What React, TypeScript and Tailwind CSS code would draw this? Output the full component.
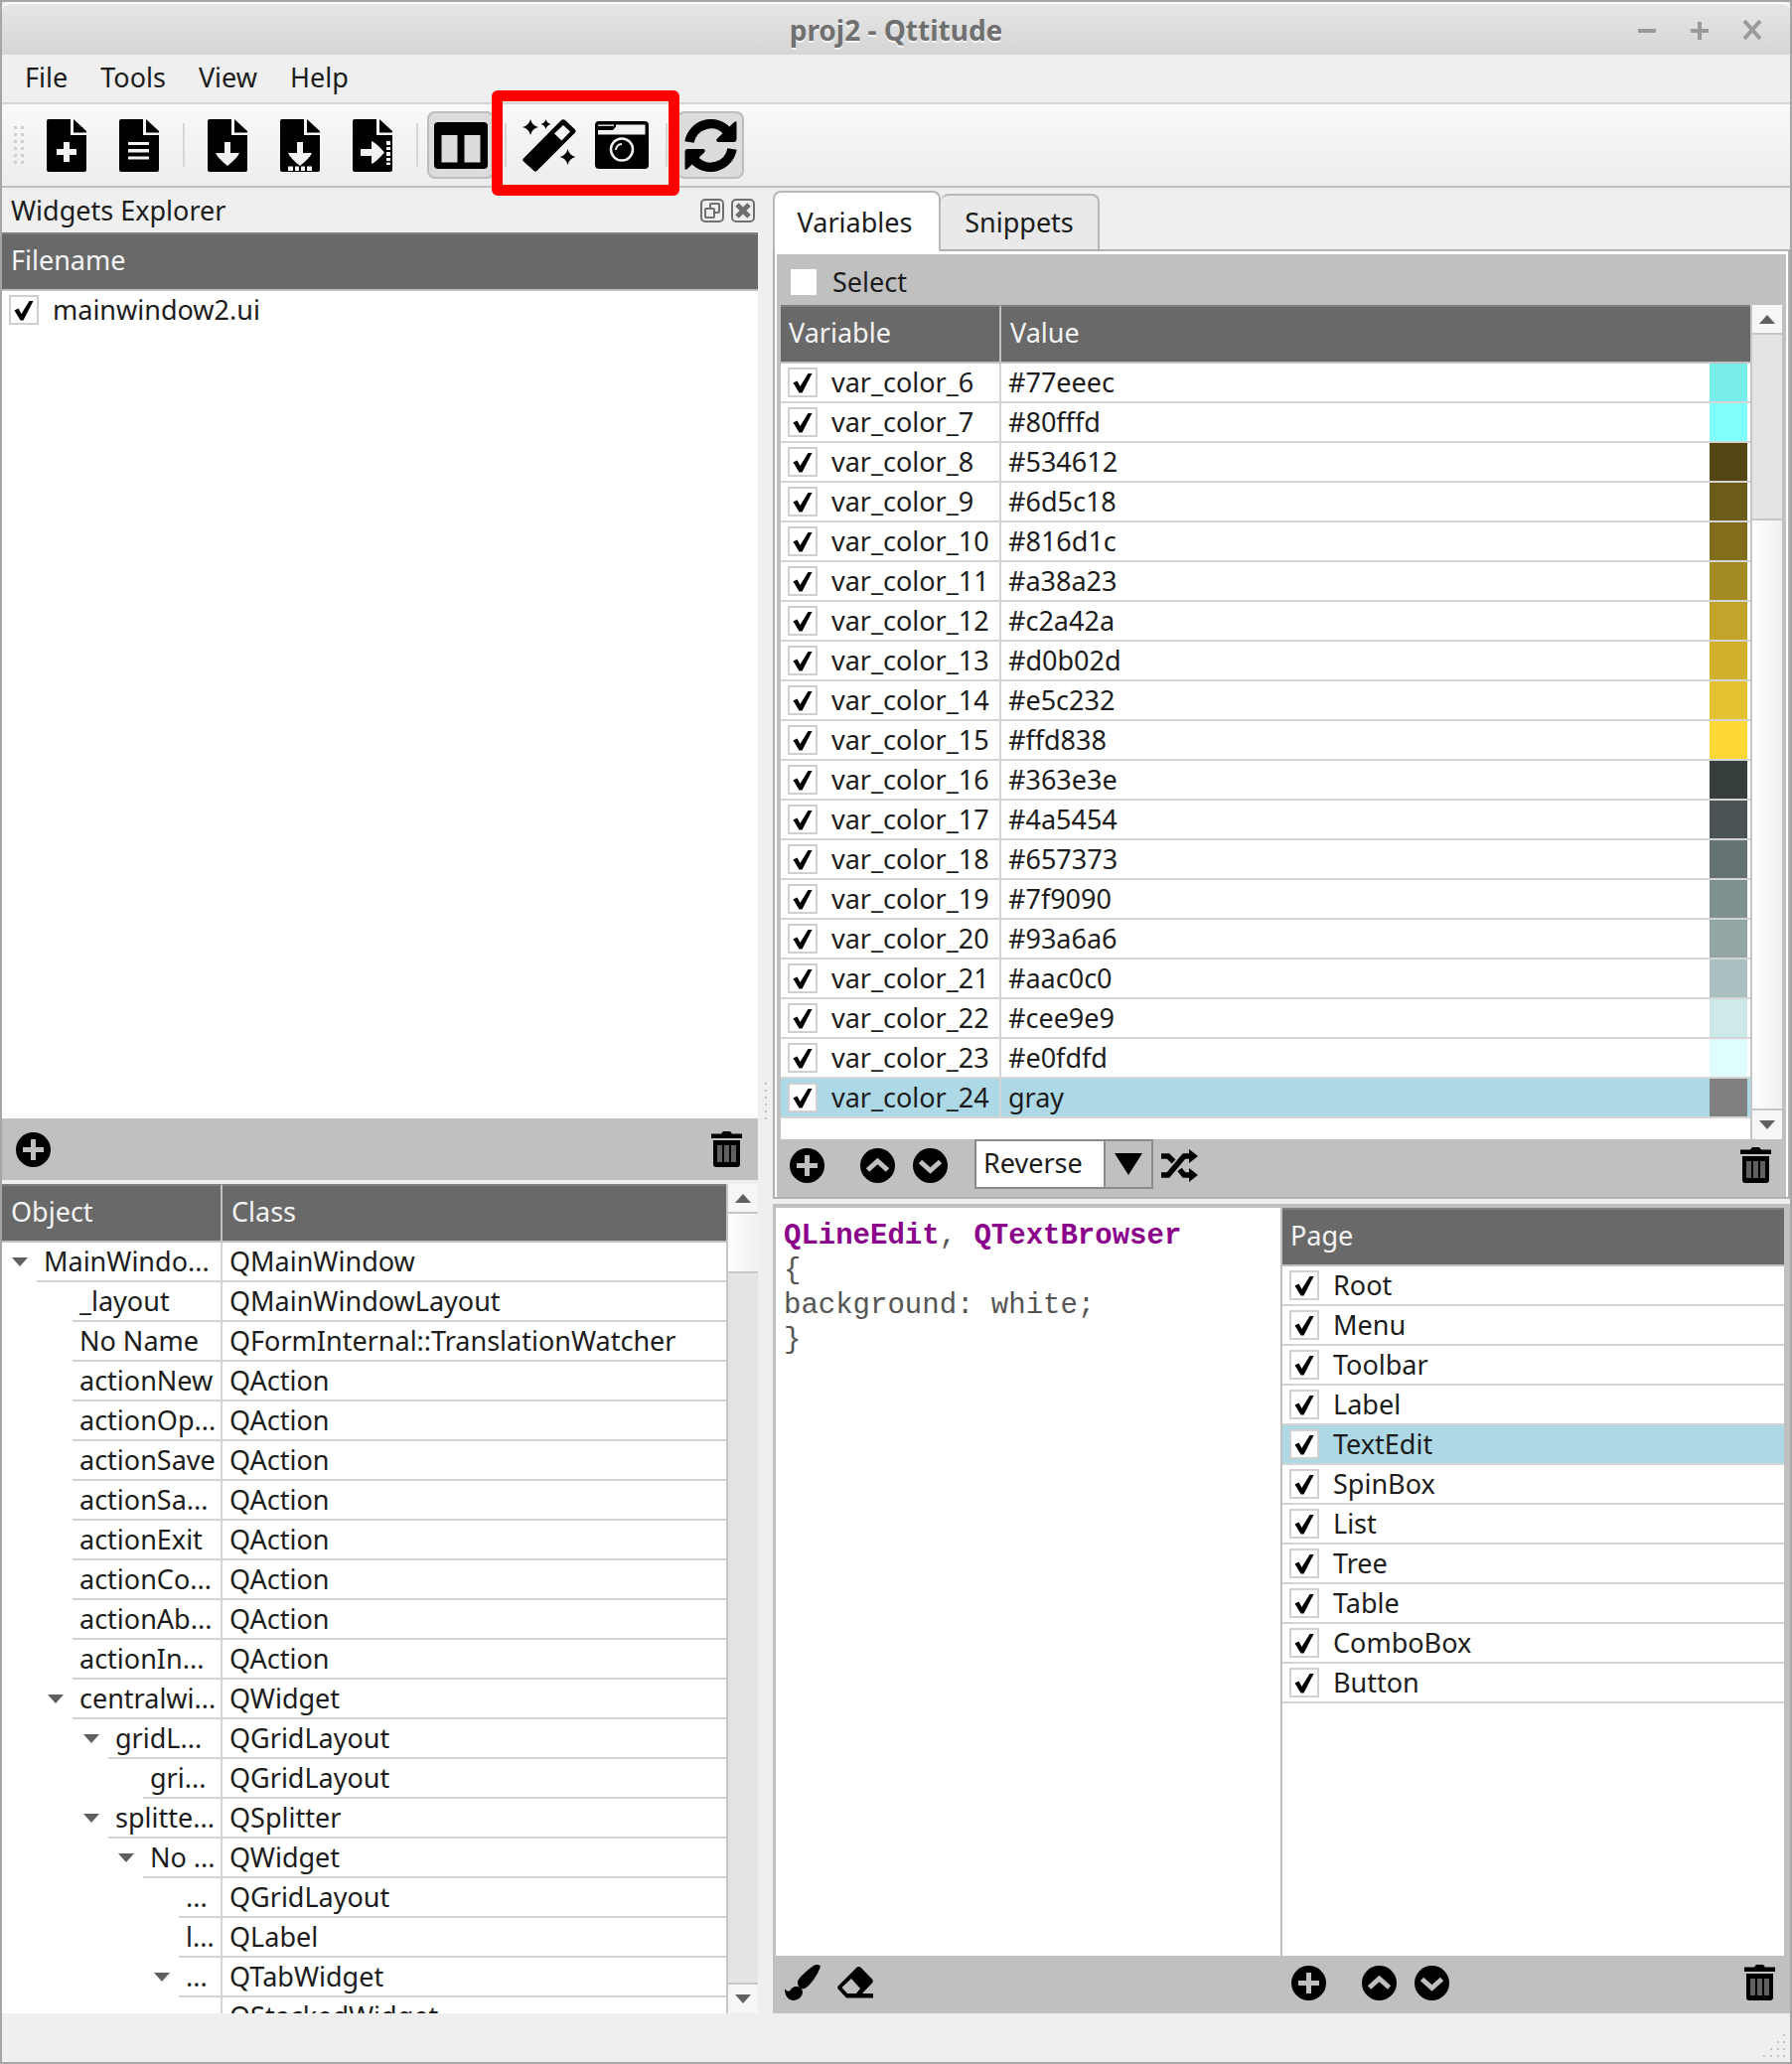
import type { InputHTMLAttributes, ReactNode } from "react"
import clsx from "clsx"

interface IconButtonProps {
  label: string
  className?: string
  children: ReactNode
}

interface TreeNode {
  depth: number
  name: string
  cls: string
  open?: boolean
}

const variables = [
  { name: "var_color_6", value: "#77eeec" },
  { name: "var_color_7", value: "#80fffd" },
  { name: "var_color_8", value: "#534612" },
  { name: "var_color_9", value: "#6d5c18" },
  { name: "var_color_10", value: "#816d1c" },
  { name: "var_color_11", value: "#a38a23" },
  { name: "var_color_12", value: "#c2a42a" },
  { name: "var_color_13", value: "#d0b02d" },
  { name: "var_color_14", value: "#e5c232" },
  { name: "var_color_15", value: "#ffd838" },
  { name: "var_color_16", value: "#363e3e" },
  { name: "var_color_17", value: "#4a5454" },
  { name: "var_color_18", value: "#657373" },
  { name: "var_color_19", value: "#7f9090" },
  { name: "var_color_20", value: "#93a6a6" },
  { name: "var_color_21", value: "#aac0c0" },
  { name: "var_color_22", value: "#cee9e9" },
  { name: "var_color_23", value: "#e0fdfd" },
  { name: "var_color_24", value: "gray", selected: true },
]

const pages = [
  "Root",
  "Menu",
  "Toolbar",
  "Label",
  "TextEdit",
  "SpinBox",
  "List",
  "Tree",
  "Table",
  "ComboBox",
  "Button",
]

const tree: TreeNode[] = [
  { depth: 0, name: "MainWindo...", cls: "QMainWindow", open: true },
  { depth: 1, name: "_layout", cls: "QMainWindowLayout" },
  { depth: 1, name: "No Name", cls: "QFormInternal::TranslationWatcher" },
  { depth: 1, name: "actionNew", cls: "QAction" },
  { depth: 1, name: "actionOp...", cls: "QAction" },
  { depth: 1, name: "actionSave", cls: "QAction" },
  { depth: 1, name: "actionSa...", cls: "QAction" },
  { depth: 1, name: "actionExit", cls: "QAction" },
  { depth: 1, name: "actionCo...", cls: "QAction" },
  { depth: 1, name: "actionAb...", cls: "QAction" },
  { depth: 1, name: "actionIn...", cls: "QAction" },
  { depth: 1, name: "centralwi...", cls: "QWidget", open: true },
  { depth: 2, name: "gridL...", cls: "QGridLayout", open: true },
  { depth: 3, name: "gri...", cls: "QGridLayout" },
  { depth: 2, name: "splitte...", cls: "QSplitter", open: true },
  { depth: 3, name: "No ...", cls: "QWidget", open: true },
  { depth: 4, name: "...", cls: "QGridLayout" },
  { depth: 4, name: "l...", cls: "QLabel" },
  { depth: 4, name: "...", cls: "QTabWidget", open: true },
  { depth: 5, name: "", cls: "QStackedWidget" },
]

const indents = ["ml-[35px]", "ml-[71px]", "ml-[107px]", "ml-[142px]", "ml-[178px]", "ml-[214px]"]

/* ---------- icons ---------- */

function FileIcon({ children }: { children: ReactNode }) {
  return (
    <svg width="40" height="53" viewBox="0 0 40 53" aria-hidden="true">
      <path d="M2 0H24V16H40V51a2 2 0 0 1-2 2H2a2 2 0 0 1-2-2V2a2 2 0 0 1 2-2Z" />
      <path d="M27 0L40 12V13.500H27Z" />
      <g fill="#f2f2f2">{children}</g>
    </svg>
  )
}

function LayoutIcon() {
  return (
    <svg width="54" height="47" viewBox="0 0 54 47" aria-hidden="true">
      <path
        fillRule="evenodd"
        d="M4 0H50a4 4 0 0 1 4 4V43a4 4 0 0 1-4 4H4a4 4 0 0 1-4-4V4a4 4 0 0 1 4-4ZM7.500 13V40.500H23.500V13ZM30.500 13V40.500H46.500V13Z"
      />
    </svg>
  )
}

function WandIcon() {
  return (
    <svg width="54" height="53" viewBox="0 0 54 53" aria-hidden="true">
      <path
        fillRule="evenodd"
        d="M39 1Q41-.5 43 1L53 10.500Q54 12 53 13.500L14.500 52Q13 53.500 11.500 52L1 42.500Q-.5 41 1 39.500ZM41 6L32 14.500L39.500 21.500L48 12.500Z"
      />
      <path d="M8 0Q9.500 6.500 16 8Q9.500 9.500 8 16Q6.500 9.500 0 8Q6.500 6.500 8 0Z" />
      <path d="M23.500 0Q24.500 4 28.500 5Q24.500 6 23.500 10Q22.500 6 18.500 5Q22.500 4 23.500 0Z" />
      <path d="M45.500 30Q47 36.500 53.500 38Q47 39.500 45.500 46Q44 39.500 37.500 38Q44 36.500 45.500 30Z" />
    </svg>
  )
}

function CameraIcon() {
  return (
    <svg width="54" height="48" viewBox="0 0 54 48" aria-hidden="true">
      <rect width="54" height="48" rx="4" />
      <path fill="#f2f2f2" d="M3 9H18L21 5.500V3.500H50.500V13.500H3Z" />
      <path fill="#d8d8d8" d="M3 3.500H19V5H3Z" />
      <circle cx="27" cy="28.500" r="11" fill="none" stroke="#f2f2f2" strokeWidth="2.500" />
      <path d="M21 29a6 6 0 0 1 6-6" fill="none" stroke="#f2f2f2" strokeWidth="2" />
    </svg>
  )
}

function SyncIcon() {
  return (
    <svg width="53" height="53" viewBox="0 0 53 53" aria-hidden="true">
      <path d="M5 23A22 22 0 0 1 43 12" fill="none" stroke="#000" strokeWidth="9.500" />
      <path d="M52.500 3V20a3 3 0 0 1-3 3H34Q31 22 33 19.500L50 3Q52 1.500 52.500 3Z" />
      <path d="M48 30A22 22 0 0 1 10 41" fill="none" stroke="#000" strokeWidth="9.500" />
      <path d="M.5 50V33a3 3 0 0 1 3-3H19Q22 31 20 33.500L3 50Q1 51.500 .5 50Z" />
    </svg>
  )
}

function CircleIcon({ d }: { d: string }) {
  return (
    <svg width="35" height="35" viewBox="0 0 35 35" aria-hidden="true">
      <circle cx="17.500" cy="17.500" r="17.500" />
      <path d={d} fill="none" stroke="#c0c0c0" strokeWidth="5" />
    </svg>
  )
}

const plusPath = "M17.500 7V28M7 17.500H28"
const upPath = "M7.500 22L17.500 13L27.500 22"
const downPath = "M7.500 13.500L17.500 22.500L27.500 13.500"

function TrashIcon() {
  return (
    <svg width="31" height="36" viewBox="0 0 31 36" aria-hidden="true">
      <path d="M0 2.500H10L12 0H19L21 2.500H31V7H0ZM2 9H29V33a3 3 0 0 1-3 3H5a3 3 0 0 1-3-3Z" />
      <path fill="#606060" d="M6 14H11V31H6ZM13 14H18V31H13ZM20 14H25V31H20Z" />
    </svg>
  )
}

function ShuffleIcon() {
  return (
    <svg width="37" height="33" viewBox="0 0 37 33" aria-hidden="true">
      <path
        d="M0 7H7L12.500 12.500M0 26H7L23 7H30M18.500 20.500L23 26H30"
        fill="none"
        stroke="#000"
        strokeWidth="5.500"
      />
      <path d="M28 0L37 7L28 14ZM28 19L37 26L28 33Z" />
    </svg>
  )
}

function BrushIcon() {
  return (
    <svg width="36" height="36" viewBox="0 0 36 36" aria-hidden="true">
      <path d="M36 2C35-.5 31-.3 29 1C22 6 14 13 13 17C12.500 22 16 25 20 24C26 21 33 10 36 2Z" />
      <path d="M12 22C16 22 18 25 18 28C17 34 12 36 8 36C3 35 0 31 0 24.500C3 27.500 5 27 6 25C8 22.500 10 22 12 22Z" />
    </svg>
  )
}

function EraserIcon() {
  return (
    <svg width="36" height="32" viewBox="0 0 36 32" aria-hidden="true">
      <path
        fillRule="evenodd"
        d="M19.500 .7Q21.500-.6 23.500 .7L35 12.500Q36.500 14.500 35 16.500L25 27H36V31.500H9L.7 22.500Q-.5 21 .7 19.500ZM14 12L4.500 21L10 27H19L23 22Z"
      />
    </svg>
  )
}

function Triangle({ up = false }: { up?: boolean }) {
  return (
    <svg width="16" height="9" viewBox="0 0 16 9" className="shrink-0" aria-hidden="true">
      <path d={up ? "M0 9L8 0L16 9Z" : "M0 0L8 9L16 0Z"} fill="#5f5f5f" />
    </svg>
  )
}

/* ---------- controls ---------- */

function ToolButton({ label, pressed, children }: IconButtonProps & { pressed?: boolean }) {
  return (
    <button
      aria-label={label}
      aria-pressed={pressed}
      className={clsx(
        "flex h-[68px] w-[68px] shrink-0 items-center justify-center rounded-lg border-2",
        pressed ? "border-[#bdbdbd] bg-[#dcdcdc]" : "border-transparent",
      )}
    >
      {children}
    </button>
  )
}

function Separator() {
  return (
    <div className="flex h-11 w-[11px] shrink-0 justify-center">
      <div className="w-0.5 bg-[#d6d6d6]" />
    </div>
  )
}

function IconButton({ label, className, children }: IconButtonProps) {
  return (
    <button
      aria-label={label}
      className={clsx("flex h-9 w-[53px] shrink-0 items-center justify-center", className)}
    >
      {children}
    </button>
  )
}

function Checkbox(props: InputHTMLAttributes<HTMLInputElement>) {
  return (
    <span className="relative block h-[30px] w-[30px] shrink-0">
      <input
        type="checkbox"
        className="peer block h-full w-full appearance-none border-2 border-[#d0d0d0] bg-white"
        {...props}
      />
      <svg
        viewBox="0 0 30 30"
        className="pointer-events-none absolute inset-0 hidden peer-checked:block"
        aria-hidden="true"
      >
        <path d="M5.500 15.500L9.500 13.500L12.500 19L20.500 6H24.500L14.500 25.500H11.500Z" />
      </svg>
    </span>
  )
}

function ScrollBar({ thumb }: { thumb: "top" | "bottom" }) {
  return (
    <div className="flex w-8 shrink-0 flex-col border-l-2 border-[#c6c6c6] bg-[#e4e4e4]">
      <button
        aria-label="Scroll up"
        className="flex h-[30px] shrink-0 items-center justify-center border-b-2 border-[#c6c6c6] bg-[#f6f6f6]"
      >
        <Triangle up />
      </button>
      {thumb === "top" ? (
        <div className="h-[60px] shrink-0 border-b-2 border-[#c6c6c6] bg-linear-to-r from-white to-[#f0f0f0]" />
      ) : (
        <>
          <div className="grow-[186]" />
          <div className="grow-[594] border-t-2 border-[#c6c6c6] bg-linear-to-r from-white to-[#f0f0f0]" />
        </>
      )}
      {thumb === "top" && <div className="grow" />}
      <button
        aria-label="Scroll down"
        className="flex h-[31px] shrink-0 items-center justify-center border-t-2 border-[#c6c6c6] bg-[#f6f6f6]"
      >
        <Triangle />
      </button>
    </div>
  )
}

const headCell =
  "h-[59px] border-y-2 border-t-[#808080] border-b-[#c0c0c0] bg-[#696969] pt-0 pb-1 text-left font-normal text-[#f4f4f4]"

/* ---------- panels ---------- */

function TitleBar() {
  return (
    <header className="grid h-[53px] shrink-0 grid-cols-[1fr_auto_1fr] items-center rounded-t-lg border-t-2 border-white bg-linear-to-b from-[#e6e6e6] to-[#d5d5d5] px-5">
      <span />
      <h1 className="text-[28px] font-bold text-[#707070] [text-shadow:0_2px_0_#f4f4f4]">
        proj2 - Qttitude
      </h1>
      <div className="flex justify-end gap-[17px]">
        {["M9 15H27", "M18 6V24M9 15H27", "M10 5L26 23M26 5L10 23"].map((d, i) => (
          <button key={d} aria-label={["Minimize", "Maximize", "Close"][i]}>
            <svg width="36" height="28" viewBox="0 0 36 28" aria-hidden="true">
              <path d={d} fill="none" stroke="#9a9a9a" strokeWidth="4" />
            </svg>
          </button>
        ))}
      </div>
    </header>
  )
}

function ToolBar() {
  return (
    <div className="flex h-[86px] shrink-0 items-center gap-[5px] border-y-2 border-t-[#d4d4d4] border-b-[#bfbfbf] bg-linear-to-b from-[#f9f9f9] to-[#ededed] pl-3">
      <div className="mr-1 grid grid-cols-2 gap-1">
        {Array.from({ length: 12 }, (_, i) => (
          <div key={i} className="h-[3px] w-[3px] bg-[#d0d0d0]" />
        ))}
      </div>
      <ToolButton label="New file">
        <FileIcon>
          <path d="M17 23H23V30H30V36H23V43H17V36H10V30H17Z" />
        </FileIcon>
      </ToolButton>
      <ToolButton label="Open file">
        <FileIcon>
          <path d="M9 23H30V26H9ZM9 30H30V33.500H9ZM9 37.500H30V40.500H9Z" />
        </FileIcon>
      </ToolButton>
      <Separator />
      <ToolButton label="Save">
        <FileIcon>
          <path d="M17 23H23V34H32Q30 39 20 47Q10 39 8 34H17Z" />
        </FileIcon>
      </ToolButton>
      <ToolButton label="Save as">
        <FileIcon>
          <path d="M17 23H23V34H32Q30 39 20 47Q10 39 8 34H17Z" />
          <path d="M8 47.500H13V52H8ZM15 47.500H19V52H15ZM21 47.500H25V52H21ZM27 47.500H32V52H27Z" />
        </FileIcon>
      </ToolButton>
      <ToolButton label="Export">
        <FileIcon>
          <path d="M8 30H19V22Q24 24 32 33.500Q24 43 19 45V37H8Z" />
          <path d="M34 22H38V26H34ZM34 28H38V31H34ZM34 33H38V37H34ZM34 39H38V42H34ZM34 43.500H38V46H34Z" />
        </FileIcon>
      </ToolButton>
      <Separator />
      <ToolButton label="Panels" pressed>
        <LayoutIcon />
      </ToolButton>
      <Separator />
      <div className="relative flex gap-[5px]">
        <ToolButton label="Apply style">
          <WandIcon />
        </ToolButton>
        <ToolButton label="Screenshot">
          <CameraIcon />
        </ToolButton>
        <div className="pointer-events-none absolute -inset-x-[24px] -top-[21px] -bottom-[17px] z-20 rounded-md border-[11px] border-[#ff0000]" />
      </div>
      <Separator />
      <ToolButton label="Auto refresh" pressed>
        <SyncIcon />
      </ToolButton>
    </div>
  )
}

function WidgetsExplorer() {
  return (
    <section className="flex min-h-0 flex-col">
      <div className="flex h-[45px] shrink-0 items-center gap-[7px] pr-[3px] pl-[9px]">
        <h2 className="grow">Widgets Explorer</h2>
        <button aria-label="Float">
          <svg width="24" height="24" viewBox="0 0 24 24" fill="none" stroke="#707070" strokeWidth="2" aria-hidden="true">
            <rect x="1" y="1" width="22" height="22" rx="4" />
            <rect x="10" y="5" width="9" height="9" rx="1" />
            <rect x="5" y="10" width="9" height="9" rx="1" fill="#efefef" />
          </svg>
        </button>
        <button aria-label="Close panel">
          <svg width="24" height="24" viewBox="0 0 24 24" fill="none" stroke="#707070" strokeWidth="2" aria-hidden="true">
            <rect x="1" y="1" width="22" height="22" rx="4" />
            <path d="M6 6L18 18M18 6L6 18" strokeWidth="5" />
          </svg>
        </button>
      </div>
      <div className="min-h-0 grow bg-white">
        <table className="w-full border-separate border-spacing-0">
          <thead>
            <tr>
              <th className={clsx(headCell, "pl-[9px]")}>Filename</th>
            </tr>
          </thead>
          <tbody>
            <tr>
              <td className="p-0 pl-[7px]">
                <label className="flex h-[38px] items-center gap-[14px]">
                  <Checkbox defaultChecked />
                  mainwindow2.ui
                </label>
              </td>
            </tr>
          </tbody>
        </table>
      </div>
      <div className="flex h-[62px] shrink-0 items-center justify-between bg-[#c0c0c0] px-[5px]">
        <IconButton label="Add file">
          <CircleIcon d={plusPath} />
        </IconButton>
        <IconButton label="Delete file">
          <TrashIcon />
        </IconButton>
      </div>
    </section>
  )
}

function ObjectTree() {
  return (
    <section className="flex min-h-0">
      <div className="min-h-0 min-w-0 grow overflow-hidden bg-white">
        <table className="w-full table-fixed border-separate border-spacing-0">
          <thead>
            <tr>
              <th className={clsx(headCell, "w-[222px] border-r-2 border-r-[#c0c0c0] pl-[9px]")}>Object</th>
              <th className={clsx(headCell, "pl-[9px]")}>Class</th>
            </tr>
          </thead>
          <tbody>
            {tree.map((node, i) => (
              <tr key={i}>
                <td className="border-r-2 border-[#d4d4d4] p-0">
                  <div
                    className={clsx(
                      "relative flex h-10 items-center border-b-2 border-[#d4d4d4] pl-[7px] whitespace-nowrap",
                      indents[node.depth],
                    )}
                  >
                    {node.open && (
                      <button aria-label="Collapse" className="absolute -left-[25px]">
                        <Triangle />
                      </button>
                    )}
                    {node.name}
                  </div>
                </td>
                <td className="h-10 border-b-2 border-[#d4d4d4] p-0 pl-[7px]">{node.cls}</td>
              </tr>
            ))}
          </tbody>
        </table>
      </div>
      <ScrollBar thumb="top" />
    </section>
  )
}

function VariablesPanel() {
  return (
    <section className="flex min-h-0 flex-col">
      <div role="tablist" className="flex h-[62px] shrink-0 items-end">
        <button
          role="tab"
          aria-selected="true"
          className="relative z-10 -mb-0.5 h-[61px] w-[169px] rounded-t-lg border-2 border-b-0 border-[#b8b8b8] bg-white pr-1"
        >
          Variables
        </button>
        <button
          role="tab"
          aria-selected="false"
          className="h-[56px] w-[160px] rounded-t-lg border-2 border-b-0 border-l-0 border-[#b8b8b8] bg-[#e9e9e9]"
        >
          Snippets
        </button>
      </div>
      <div className="flex min-h-0 grow flex-col border-2 border-[#b0b0b0] bg-white px-0.5 pt-[3px]">
        <div className="flex min-h-0 grow flex-col bg-[#c0c0c0] px-1">
          <label className="flex h-[51px] shrink-0 items-center gap-[14px] pt-1 pl-2">
            <Checkbox style={{ borderColor: "#c0c0c0" }} />
            Select
          </label>
          <div className="flex min-h-0 grow">
            <div className="min-w-0 grow overflow-hidden bg-white">
              <table className="w-full table-fixed border-separate border-spacing-0">
                <thead>
                  <tr>
                    <th className={clsx(headCell, "w-[222px] border-r-2 border-r-[#c0c0c0] pl-2")}>Variable</th>
                    <th className={clsx(headCell, "pl-[9px]")}>Value</th>
                  </tr>
                </thead>
                <tbody>
                  {variables.map((v) => (
                    <tr key={v.name} className={v.selected ? "bg-[#add8e6]" : ""}>
                      <td className="h-10 border-r-2 border-b-2 border-[#d4d4d4] p-0 pl-[7px]">
                        <label className="flex items-center gap-[14px] whitespace-nowrap">
                          <Checkbox defaultChecked />
                          {v.name}
                        </label>
                      </td>
                      <td className="h-10 border-b-2 border-[#d4d4d4] p-0 pl-[7px]">
                        <div className="flex h-[38px] items-center justify-between pr-[3px]">
                          {v.value}
                          <span className="h-full w-[38px]" style={{ background: v.value }} />
                        </div>
                      </td>
                    </tr>
                  ))}
                </tbody>
              </table>
            </div>
            <ScrollBar thumb="bottom" />
          </div>
          <div className="flex h-[58px] shrink-0 items-start">
            <IconButton label="Add variable" className="mt-2">
              <CircleIcon d={plusPath} />
            </IconButton>
            <IconButton label="Move up" className="mt-2 ml-[18px]">
              <CircleIcon d={upPath} />
            </IconButton>
            <IconButton label="Move down" className="mt-2">
              <CircleIcon d={downPath} />
            </IconButton>
            <div className="relative ml-[18px] flex h-[50px] w-[180px]">
              <select
                aria-label="Order"
                className="w-full appearance-none border-2 border-[#8a8a8a] bg-white pb-0.5 pl-[7px]"
              >
                <option>Reverse</option>
              </select>
              <div className="pointer-events-none absolute inset-y-0.5 right-0.5 flex w-[48px] items-center justify-center border-l-2 border-[#8a8a8a] bg-[#c0c0c0]">
                <svg width="28" height="22" viewBox="0 0 28 22" aria-hidden="true">
                  <path d="M0 0H28L14 22Z" />
                </svg>
              </div>
            </div>
            <IconButton label="Shuffle" className="mt-2">
              <ShuffleIcon />
            </IconButton>
            <IconButton label="Delete variable" className="mt-2 ml-auto">
              <TrashIcon />
            </IconButton>
          </div>
        </div>
      </div>
    </section>
  )
}

function StylePanel() {
  return (
    <section className="grid min-h-0 grid-cols-[508fr_509fr] bg-[#c0c0c0] pt-1 pr-1 pl-[3px]">
      <div className="flex min-h-0 flex-col">
        <pre
          role="textbox"
          aria-label="Style sheet"
          contentEditable
          suppressContentEditableWarning
          className="grow bg-white pt-[11px] pl-2 font-['Liberation_Mono',monospace] text-[29px] leading-[35px] text-[#555]"
        >
          <b className="text-[#8b008b]">QLineEdit</b>, <b className="text-[#8b008b]">QTextBrowser</b>
          {"\n{\nbackground: white;\n}"}
        </pre>
        <div className="flex h-[58px] shrink-0 items-center pb-1">
          <IconButton label="Apply style">
            <BrushIcon />
          </IconButton>
          <IconButton label="Clear style">
            <EraserIcon />
          </IconButton>
        </div>
      </div>
      <div className="flex min-h-0 flex-col pl-0.5">
        <div className="mr-0.5 grow bg-white">
          <table className="w-full border-separate border-spacing-0">
            <thead>
              <tr>
                <th className={clsx(headCell, "pl-2")}>Page</th>
              </tr>
            </thead>
            <tbody>
              {pages.map((page) => (
                <tr key={page} className={page === "TextEdit" ? "bg-[#add8e6]" : ""}>
                  <td className="h-10 border-b-2 border-[#d4d4d4] p-0 pl-[7px]">
                    <label className="flex items-center gap-[14px]">
                      <Checkbox defaultChecked />
                      {page}
                    </label>
                  </td>
                </tr>
              ))}
            </tbody>
          </table>
        </div>
        <div className="flex h-[58px] shrink-0 items-center pb-1">
          <IconButton label="Add page">
            <CircleIcon d={plusPath} />
          </IconButton>
          <IconButton label="Move page up" className="ml-[18px]">
            <CircleIcon d={upPath} />
          </IconButton>
          <IconButton label="Move page down">
            <CircleIcon d={downPath} />
          </IconButton>
          <IconButton label="Delete page" className="ml-auto">
            <TrashIcon />
          </IconButton>
        </div>
      </div>
    </section>
  )
}

export default function App() {
  return (
    <div className="flex h-screen flex-col border-2 border-[#a6a6a6] bg-[#efefef] font-['Noto_Sans',sans-serif] text-[27px] leading-9 text-[#1c1c1c]">
      <TitleBar />
      <nav className="flex h-12 shrink-0 items-center gap-[33px] pb-0.5 pl-[23px]">
        {["File", "Tools", "View", "Help"].map((item) => (
          <button key={item}>{item}</button>
        ))}
      </nav>
      <ToolBar />
      <main className="grid min-h-0 grow grid-cols-[761fr_15px_1024fr]">
        <div className="grid min-h-0 grid-rows-[999fr_835fr] gap-1">
          <WidgetsExplorer />
          <ObjectTree />
        </div>
        <div className="flex flex-col items-center justify-center gap-[5px]">
          {Array.from({ length: 6 }, (_, i) => (
            <div key={i} className="h-0.5 w-0.5 bg-[#c0c0c0]" />
          ))}
        </div>
        <div className="grid min-h-0 grid-rows-[1018fr_815fr] gap-[5px]">
          <VariablesPanel />
          <StylePanel />
        </div>
      </main>
      <footer className="flex h-[49px] shrink-0 items-end justify-end p-1">
        <svg width="24" height="24" viewBox="0 0 24 24" fill="#c4c4c4" aria-hidden="true">
          <path d="M1 21H3V23H1ZM8 21H10V23H8ZM15 21H17V23H15ZM21 21H23V23H21ZM8 14H10V16H8ZM15 14H17V16H15ZM21 14H23V16H21ZM15 7H17V9H15ZM21 7H23V9H21ZM21 0H23V2H21Z" />
        </svg>
      </footer>
    </div>
  )
}
